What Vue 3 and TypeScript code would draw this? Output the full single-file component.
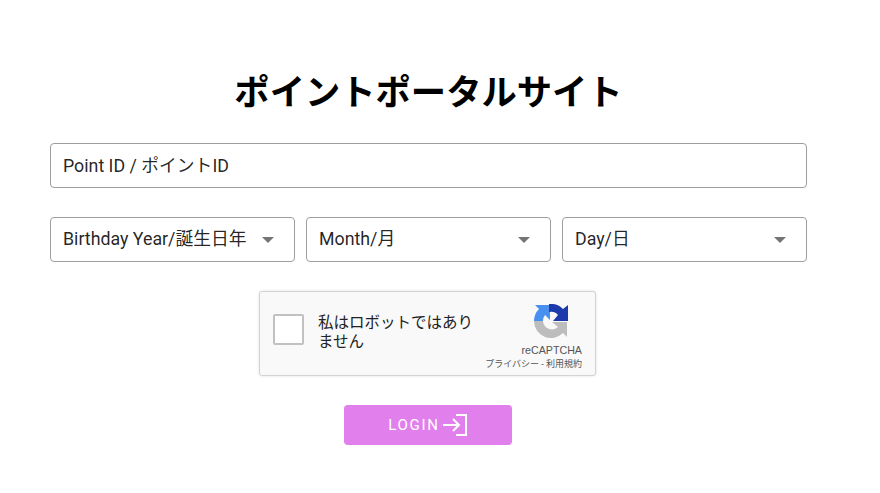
<template>
  <main class="page">
    <h1 class="title">ポイントポータルサイト</h1>

    <form class="form" @submit.prevent>
      <input class="field" type="text" placeholder="Point ID / ポイントID">

      <div class="birthday">
        <div v-for="label in selects" :key="label" class="select">
          <span class="select-label">{{ label }}</span>
          <i class="caret"></i>
        </div>
      </div>

      <div class="captcha">
        <span class="checkbox"></span>
        <p class="captcha-text">私はロボットではありません</p>
        <div class="brand">
          <svg class="logo" viewBox="0 0 34 34" width="34" height="34">
            <path d="M0 17 A17 17 0 0 1 5 5 L1 1 L16 1 L16 16 L11 11 A9 9 0 0 0 9 17 Z" fill="#4a90f0" />
            <path d="M15 0 A17 17 0 0 1 29 5 L34 1 L34 17 L19 17 L24 11 A9 9 0 0 0 15 8 Z" fill="#1c3aa9" />
            <path d="M0 17 L9 17 A9 9 0 0 0 24 23 L18 18 L33 18 L33 33 L29 29 A17 17 0 0 1 0 17 Z" fill="#bdbdbd" />
          </svg>
          <span class="brand-name">reCAPTCHA</span>
          <span class="brand-links">プライバシー - 利用規約</span>
        </div>
      </div>

      <button class="login" type="submit">
        <span>LOGIN</span>
        <svg viewBox="0 0 26 22" width="26" height="22" fill="none" stroke="#fff" stroke-width="2">
          <path d="M1 11 H17 M11 5 L17 11 L11 17" />
          <path d="M14 1 H24 V21 H14" />
        </svg>
      </button>
    </form>
  </main>
</template>

<script setup lang="ts">
const selects: string[] = ['Birthday Year/誕生日年', 'Month/月', 'Day/日']
</script>

<style scoped>
.page {
  width: 757px;
  margin-left: 50px;
  padding-top: 70px;
  font-family: Roboto, "Noto Sans CJK JP", sans-serif;
  color: #000;
}

.title {
  margin: 0 0 26px;
  height: 47px;
  font-size: 35.3px;
  line-height: 47px;
  font-weight: 700;
  text-align: center;
  white-space: nowrap;
}

.form {
  display: flex;
  flex-direction: column;
  align-items: center;
}

.field {
  box-sizing: border-box;
  width: 100%;
  height: 45px;
  padding: 0 12px;
  border: 1px solid #9e9e9e;
  border-radius: 4px;
  font: 17.8px Roboto, "Noto Sans CJK JP", sans-serif;
  outline: none;
}

.field::placeholder {
  color: rgba(0, 0, 0, 0.87);
  opacity: 1;
}

.birthday {
  display: grid;
  grid-template-columns: repeat(3, 1fr);
  column-gap: 11px;
  width: 100%;
  margin-top: 29px;
}

.select {
  box-sizing: border-box;
  display: flex;
  align-items: center;
  justify-content: space-between;
  height: 45px;
  padding: 0 20px 0 12px;
  border: 1px solid #9e9e9e;
  border-radius: 4px;
  font-size: 17.8px;
  color: rgba(0, 0, 0, 0.87);
  white-space: nowrap;
}

.select-label {
  line-height: 20px;
  margin-top: -2px;
}

.caret {
  width: 0;
  height: 0;
  border-left: 6px solid transparent;
  border-right: 6px solid transparent;
  border-top: 6px solid #757575;
}

.captcha {
  box-sizing: border-box;
  display: flex;
  width: 337px;
  height: 85px;
  margin: 29px 2px 0 0;
  border: 1px solid #d3d3d3;
  border-radius: 3px;
  background: #f9f9f9;
  box-shadow: 0 0 3px rgba(0, 0, 0, 0.12);
}

.checkbox {
  box-sizing: border-box;
  flex: none;
  width: 31px;
  height: 31px;
  margin: 22px 0 0 13px;
  border: 2px solid #c1c1c1;
  border-radius: 2px;
  background: #fff;
}

.captcha-text {
  width: 160px;
  margin: 22px 0 0 14px;
  font-size: 15.5px;
  line-height: 19px;
  color: #222;
}

.brand {
  display: flex;
  flex-direction: column;
  align-items: flex-end;
  margin-left: auto;
  padding: 12px 13px 0 0;
  min-width: 0;
}

.logo {
  margin-right: 14px;
}

.brand-name {
  margin-top: 5px;
  font-family: "Liberation Sans", sans-serif;
  font-size: 10.7px;
  line-height: 14px;
  color: #555;
}

.brand-links {
  margin-top: 1px;
  font-size: 9px;
  line-height: 13px;
  color: #555;
  white-space: nowrap;
}

.login {
  display: flex;
  align-items: center;
  justify-content: center;
  gap: 2px;
  width: 168px;
  height: 40px;
  margin: 29px 1px 0 0;
  padding: 0;
  border: 0;
  border-radius: 4px;
  background: #e180ec;
  color: #fff;
  font: 400 15px Roboto, sans-serif;
  letter-spacing: 1.7px;
}
</style>

<style>
html, body {
  background: #fff;
}
</style>
